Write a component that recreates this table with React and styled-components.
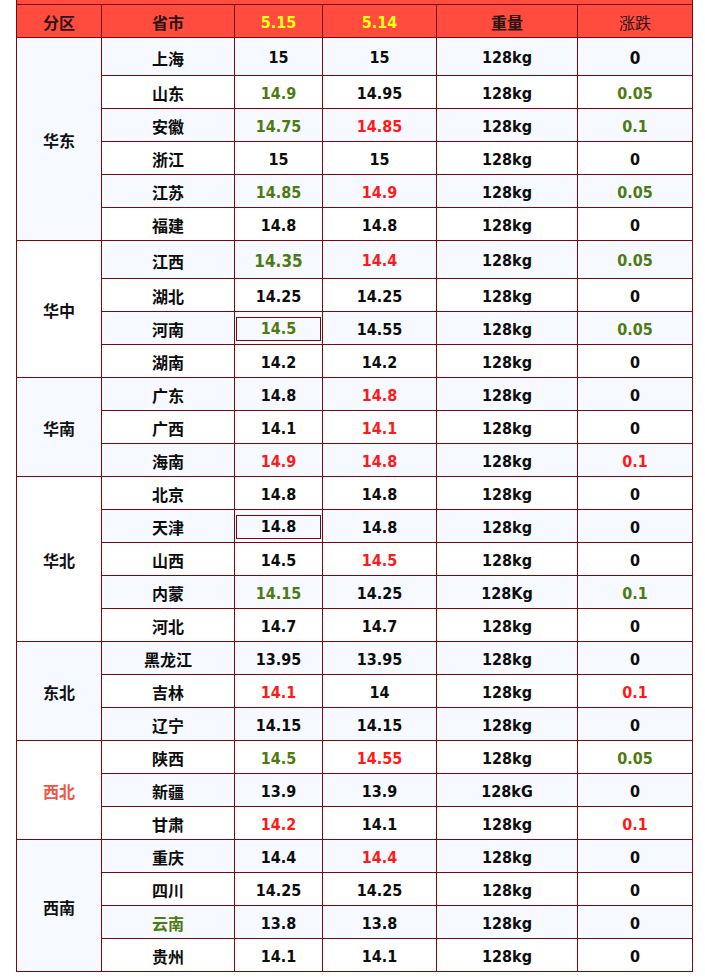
import React from 'react'
import styled, { createGlobalStyle } from 'styled-components'

const Global = createGlobalStyle`
  html, body {
    margin: 0;
    padding: 0;
    background: #ffffff;
  }
`;

const Page = styled.div`
  padding-left: 16px;
  width: 705px;
  box-sizing: border-box;
`;

const Table = styled.table`
  border-collapse: collapse;
  table-layout: fixed;
  width: 676px;
  font-family: "DejaVu Sans Condensed", "DejaVu Sans", "Noto Sans CJK SC", sans-serif;
  font-stretch: semi-condensed;
  font-size: 16px;
  font-weight: bold;
  color: #0d0d0d;
`;

const Strip = styled.td`
  height: 4px;
  padding: 0;
  background: #ff4c3f;
  border-left: 1px solid #7a0a0a;
  border-right: 1px solid #7a0a0a;
  border-bottom: 1px solid #7a0a0a;
`;

const HeadCell = styled.th`
  height: 30px;
  padding: 2px 0 0;
  background: #ff4c3f;
  border: 1px solid #7a0a0a;
  text-align: center;
  font-family: "Noto Sans CJK SC", sans-serif;
  font-weight: ${p => (p.$light ? 'normal' : 'bold')};
  color: ${p => p.$color || '#2a1212'};
`;

const DateHead = styled(HeadCell)`
  font-family: "DejaVu Sans Condensed", "DejaVu Sans", sans-serif;
  color: #ffff1a;
`;

const Row = styled.tr`
  height: ${p => (p.$tall ? '38px' : '33px')};
  background: ${p => (p.$shade ? '#f6f9ff' : '#ffffff')};
`;

const Region = styled.td`
  padding: 2px 0 0;
  border: 1px solid #7a0a0a;
  text-align: center;
  font-family: "Noto Sans CJK SC", sans-serif;
  background: ${p => (p.$shade ? '#f6f9ff' : '#ffffff')};
  color: ${p => p.$color || '#111111'};
`;

const Cell = styled.td`
  padding: 2px 0 0;
  border: 1px solid #7a0a0a;
  text-align: center;
  color: ${p => p.$color || '#0d0d0d'};
  font-size: ${p => (p.$big ? '17px' : '16px')};
`;

const Name = styled(Cell)`
  font-family: "Noto Sans CJK SC", sans-serif;
`;

const Boxed = styled.div`
  margin: 0 1px;
  height: 22px;
  line-height: 22px;
  border: 1px solid #7a0a0a;
`;

const G = '#4e7a12';
const R = '#ff1a1a';

const groups = [
  {
    name: '华东',
    rows: [
      ['上海', ['15'], ['15'], '128kg', ['0', null, true], true],
      ['山东', ['14.9', G], ['14.95'], '128kg', ['0.05', G]],
      ['安徽', ['14.75', G], ['14.85', R], '128kg', ['0.1', G]],
      ['浙江', ['15'], ['15'], '128kg', ['0']],
      ['江苏', ['14.85', G], ['14.9', R], '128kg', ['0.05', G]],
      ['福建', ['14.8'], ['14.8'], '128kg', ['0']],
    ],
  },
  {
    name: '华中',
    rows: [
      ['江西', ['14.35', G, true], ['14.4', R], '128kg', ['0.05', G], true],
      ['湖北', ['14.25'], ['14.25'], '128kg', ['0']],
      ['河南', ['14.5', G, false, true], ['14.55'], '128kg', ['0.05', G]],
      ['湖南', ['14.2'], ['14.2'], '128kg', ['0']],
    ],
  },
  {
    name: '华南',
    rows: [
      ['广东', ['14.8'], ['14.8', R], '128kg', ['0']],
      ['广西', ['14.1'], ['14.1', R], '128kg', ['0']],
      ['海南', ['14.9', R], ['14.8', R], '128kg', ['0.1', R]],
    ],
  },
  {
    name: '华北',
    rows: [
      ['北京', ['14.8'], ['14.8'], '128kg', ['0']],
      ['天津', ['14.8', null, false, true], ['14.8'], '128kg', ['0']],
      ['山西', ['14.5'], ['14.5', R], '128kg', ['0']],
      ['内蒙', ['14.15', G], ['14.25'], '128Kg', ['0.1', G]],
      ['河北', ['14.7'], ['14.7'], '128kg', ['0']],
    ],
  },
  {
    name: '东北',
    rows: [
      ['黑龙江', ['13.95'], ['13.95'], '128kg', ['0']],
      ['吉林', ['14.1', R], ['14'], '128kg', ['0.1', R]],
      ['辽宁', ['14.15'], ['14.15'], '128kg', ['0']],
    ],
  },
  {
    name: '西北',
    color: '#ee5544',
    rows: [
      ['陕西', ['14.5', G], ['14.55', R], '128kg', ['0.05', G]],
      ['新疆', ['13.9'], ['13.9'], '128kG', ['0']],
      ['甘肃', ['14.2', R], ['14.1'], '128kg', ['0.1', R]],
    ],
  },
  {
    name: '西南',
    rows: [
      ['重庆', ['14.4'], ['14.4', R], '128kg', ['0']],
      ['四川', ['14.25'], ['14.25'], '128kg', ['0']],
      [['云南', G], ['13.8'], ['13.8'], '128kg', ['0']],
      ['贵州', ['14.1'], ['14.1'], '128kg', ['0']],
    ],
  },
];

const Value = ({ v }) => {
  const [text, color, big, boxed] = v
  return (
    <Cell $color={color} $big={big}>
      {boxed ? <Boxed>{text}</Boxed> : text}
    </Cell>
  )
}

export default function App() {
  let idx = 0
  return (
    <>
      <Global />
      <Page>
        <Table>
          <colgroup>
            <col style={{ width: 85 }} />
            <col style={{ width: 133 }} />
            <col style={{ width: 88 }} />
            <col style={{ width: 114 }} />
            <col style={{ width: 141 }} />
            <col style={{ width: 115 }} />
          </colgroup>
          <thead>
            <tr>
              <Strip colSpan={6} />
            </tr>
            <tr>
              <HeadCell>分区</HeadCell>
              <HeadCell>省市</HeadCell>
              <DateHead>5.15</DateHead>
              <DateHead>5.14</DateHead>
              <HeadCell>重量</HeadCell>
              <HeadCell $light>涨跌</HeadCell>
            </tr>
          </thead>
          <tbody>
            {groups.map((g, gi) =>
              g.rows.map((r, ri) => {
                const [name, a, b, weight, diff, tall] = r
                const shade = idx % 2 === 0
                idx++
                const nm = Array.isArray(name) ? name : [name]
                return (
                  <Row key={nm[0]} $shade={shade} $tall={tall}>
                    {ri === 0 && (
                      <Region rowSpan={g.rows.length} $shade={gi % 2 === 0} $color={g.color}>
                        {g.name}
                      </Region>
                    )}
                    <Name $color={nm[1]}>{nm[0]}</Name>
                    <Value v={a} />
                    <Value v={b} />
                    <Cell>{weight}</Cell>
                    <Value v={diff} />
                  </Row>
                )
              })
            )}
          </tbody>
        </Table>
      </Page>
    </>
  )
}
